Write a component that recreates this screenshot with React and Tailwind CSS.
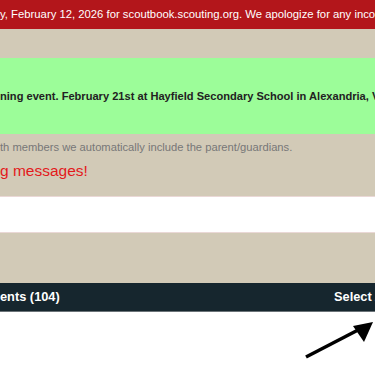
export default function App() {
  return (
    <div className="w-[375px] h-[366px] overflow-hidden bg-white" style={{ fontFamily: '"Liberation Sans", Arial, sans-serif' }}>
      <div className="h-[29px] bg-[#b3161b] text-white text-[11.3px] whitespace-nowrap overflow-hidden flex items-center">
        <span>y, February 12, 2026 for scoutbook.scouting.org. We apologize for any inconvenience.</span>
      </div>
      <div className="bg-[#d2cab7]">
        <div className="h-[29px]" />
        <div className="h-[76px] bg-[#9cfd99] flex items-center whitespace-nowrap overflow-hidden text-[11.1px] font-bold text-[#222]">
          <span>ning event. February 21st at Hayfield Secondary School in Alexandria, VA.</span>
        </div>
        <div className="h-[62px] flex flex-col whitespace-nowrap overflow-hidden">
          <div className="mt-[5px] text-[11.2px] text-[#777]">th members we automatically include the parent/guardians.</div>
          <div className="mt-[3px] text-[15.5px] text-[#e3191c]">g messages!</div>
        </div>
        <div className="h-[37px] bg-white border-y border-[#ead8d6]" />
        <div className="h-[50px]" />
      </div>
      <div className="h-[29px] bg-[#16262e] border-b border-[#6b7378] flex items-center text-white font-bold text-[12.8px] whitespace-nowrap overflow-hidden">
        <span className="w-[334px] shrink-0">ents (104)</span>
        <span className="shrink-0">Select All</span>
      </div>
      <div className="relative h-[54px]">
        <svg className="absolute left-0 top-0" width="375" height="54" viewBox="0 0 375 54">
          <line x1="306" y1="45" x2="360" y2="17" stroke="#000" strokeWidth="3.5" />
          <polygon points="373,10 353,14 364,30" fill="#000" />
        </svg>
      </div>
    </div>
  );
}
